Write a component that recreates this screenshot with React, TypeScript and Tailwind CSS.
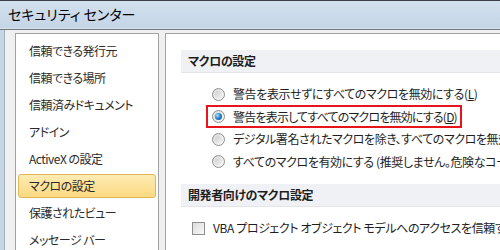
import React from 'react';

const navItems = [
  '信頼できる発行元',
  '信頼できる場所',
  '信頼済みドキュメント',
  'アドイン',
  'ActiveX の設定',
  'マクロの設定',
  '保護されたビュー',
  'メッセージ バー',
];

function Radio({ checked }: { checked?: boolean }) {
  return (
    <span className="flex h-[13px] w-[13px] shrink-0 items-center justify-center rounded-full border border-[#8f9090] bg-gradient-to-br from-[#d9d9d9] to-[#fafafa]">
      {checked ? (
        <span className="h-[7px] w-[7px] rounded-full bg-[radial-gradient(circle_at_35%_35%,#a8e0ff_0%,#2a86cc_45%,#0b4f8c_100%)]" />
      ) : (
        <span className="h-[7px] w-[7px] rounded-full bg-gradient-to-br from-[#cfcfcf] to-[#f2f2f2]" />
      )}
    </span>
  );
}

function SectionHeader({ label }: { label: string }) {
  return (
    <div className="ml-[15px] flex h-[23px] items-center border-b border-[#e3e5e8] bg-[#f0f1f4] pl-[7px] text-[12px] font-bold text-[#1e1e1e]">
      {label}
    </div>
  );
}

export default function App() {
  return (
    <div className="h-[250px] w-[500px] overflow-hidden bg-[#f0f0f0] font-['Noto_Sans_CJK_JP','Noto_Sans',sans-serif] [font-feature-settings:'palt'] text-[#1e1e1e]">
      <div className="h-px bg-[#3c3f44]" />
      {/* title bar */}
      <div className="flex h-[27px] items-center bg-gradient-to-b from-[#d3e0ee] to-[#c4d5e7] pl-[8px] text-[14px] text-black">
        セキュリティ センター
      </div>
      <div className="h-px bg-[#dde2e8]" />
      <div className="h-px bg-[#6f7780]" />

      <div className="flex h-[220px]">
        <div className="w-[4px] shrink-0 bg-[#c6d6e7]" />
        <div className="w-px shrink-0 bg-[#a4b0bc]" />

        <div className="flex flex-1 gap-[6px] pl-[10px] pt-[3px]">
          {/* left nav */}
          <div className="h-[300px] w-[144px] shrink-0 border border-[#a3a3a3] bg-white px-[2px] pt-[3px] text-[12px] tracking-[-0.5px] text-[#2a2a2a]">
            {navItems.map((item) => (
              <div key={item} className="flex h-[27px] items-center">
                <div
                  className={
                    item === 'マクロの設定'
                      ? 'flex h-[24px] w-full items-center rounded-[3px] border border-[#e0b65a] bg-gradient-to-b from-[#fdebb2] to-[#fbd981] pl-[10px]'
                      : 'flex h-[24px] w-full items-center border border-transparent pl-[10px]'
                  }
                >
                  {item}
                </div>
              </div>
            ))}
          </div>

          {/* right panel */}
          <div className="h-[300px] flex-1 border-l border-t border-[#a3a3a3] bg-white pt-[16px] text-[12px] tracking-[-0.4px] whitespace-nowrap">
            <SectionHeader label="マクロの設定" />

            <div className="mt-[10px]">
              <div className="flex h-[22.5px] items-center gap-[8px] pl-[46px]">
                <Radio />
                <span>
                  警告を表示せずにすべてのマクロを無効にする(<span className="underline">L</span>)
                </span>
              </div>
              <div className="flex h-[22.5px] items-center pl-[40px]">
                <div className="flex h-[23px] items-center gap-[8px] border-2 border-[#e8141b] pl-[4px] pr-[3px]">
                  <Radio checked />
                  <span className="tracking-[-0.8px]">
                    警告を表示してすべてのマクロを無効にする(<span className="underline">D</span>)
                  </span>
                </div>
              </div>
              <div className="flex h-[22.5px] items-center gap-[8px] pl-[46px]">
                <Radio />
                <span>デジタル署名されたマクロを除き、すべてのマクロを無効にする(G)</span>
              </div>
              <div className="flex h-[22.5px] items-center gap-[8px] pl-[46px]">
                <Radio />
                <span>すべてのマクロを有効にする (推奨しません。危険なコードが実行される可能性があります)(E)</span>
              </div>
            </div>

            <div className="mt-[11px]">
              <SectionHeader label="開発者向けのマクロ設定" />
            </div>

            <div className="mt-[10px] flex h-[22px] items-center gap-[8px] pl-[26px]">
              <span className="h-[13px] w-[13px] shrink-0 border border-[#8f8f8f] bg-gradient-to-br from-[#dcdcdc] to-[#f8f8f8]" />
              <span>
                VBA プロジェクト オブジェクト モデルへのアクセスを信頼する(<span className="underline">V</span>)
              </span>
            </div>
          </div>
        </div>
      </div>
    </div>
  );
}
